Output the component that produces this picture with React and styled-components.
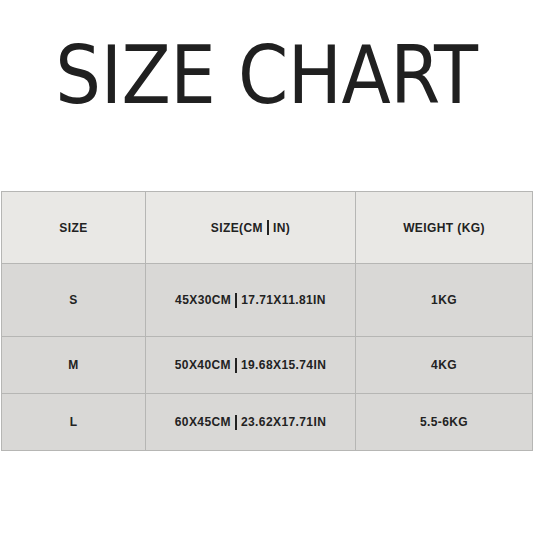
import styled, { createGlobalStyle } from "styled-components";

const GlobalStyle = createGlobalStyle`
    body {
        margin: 0;
        background: #ffffff;
        font-family: "Liberation Sans", Arial, sans-serif;
    }
`;

const Page = styled.main`
    width: 533px;
    height: 533px;
    background: #ffffff;
    display: flex;
    flex-direction: column;
`;

const Title = styled.h1`
    margin: 0;
    padding-top: 36px;
    height: 191px;
    flex-shrink: 0;
    box-sizing: border-box;
    text-align: center;
    font-family: "DejaVu Sans Condensed", "DejaVu Sans", sans-serif;
    font-stretch: condensed;
    font-weight: 400;
    font-size: 80px;
    line-height: 80px;
    letter-spacing: -0.4px;
    color: #202020;
`;

const Table = styled.div`
    margin-left: 1px;
    width: 531px;
    display: grid;
    grid-template-columns: 144px 210px 1fr;
    border-top: 1px solid #b6b6b4;
    border-left: 1px solid #b6b6b4;
`;

const Cell = styled.div`
    height: ${(p) => p.$h}px;
    box-sizing: border-box;
    display: flex;
    align-items: center;
    justify-content: center;
    background: ${(p) => (p.$head ? "#e9e8e5" : "#d9d8d6")};
    border-right: 1px solid #b6b6b4;
    border-bottom: 1px solid #b6b6b4;
    font-family: "Liberation Sans", Arial, sans-serif;
    font-weight: 700;
    font-size: 12px;
    letter-spacing: 0.4px;
    color: #222222;
    text-transform: uppercase;
`;

const Bar = styled.span`
    display: inline-block;
    width: 2px;
    height: 15px;
    background: #222222;
    margin: 0 4px;
    vertical-align: middle;
`;

const rows = [
    { size: "S", cm: "45X30CM", inch: "17.71X11.81IN", weight: "1KG", h: 73 },
    { size: "M", cm: "50X40CM", inch: "19.68X15.74IN", weight: "4KG", h: 57 },
    { size: "L", cm: "60X45CM", inch: "23.62X17.71IN", weight: "5.5-6KG", h: 57 },
];

export default function App() {
    return (
        <Page>
            <GlobalStyle />
            <Title>SIZE CHART</Title>
            <Table>
                <Cell $head $h={72}>SIZE</Cell>
                <Cell $head $h={72}>
                    SIZE(CM<Bar />IN)
                </Cell>
                <Cell $head $h={72}>WEIGHT (KG)</Cell>
                {rows.map((r) => (
                    <>
                        <Cell $h={r.h}>{r.size}</Cell>
                        <Cell $h={r.h}>
                            {r.cm}
                            <Bar />
                            {r.inch}
                        </Cell>
                        <Cell $h={r.h}>{r.weight}</Cell>
                    </>
                ))}
            </Table>
        </Page>
    );
}
